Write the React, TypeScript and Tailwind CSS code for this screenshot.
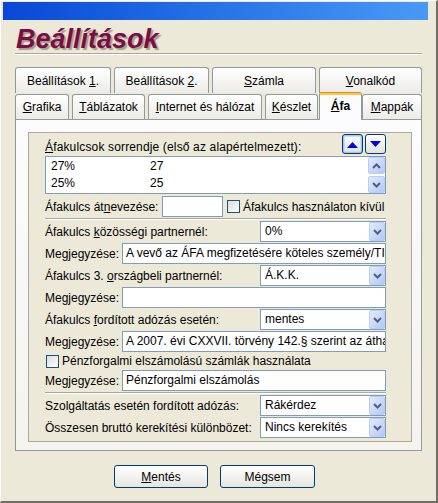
import type { ReactNode } from "react";

function Tab({
  w,
  selected,
  bold,
  children,
}: {
  w: string;
  selected?: boolean;
  bold?: boolean;
  children: ReactNode;
}) {
  if (selected) {
    return (
      <div
        className={`${w} relative z-10 -mt-[2px] h-[28px] self-start rounded-t-[3px] border-x border-[#919B9C] bg-[#FCFCFE]`}
      >
        <div className="h-[1px] rounded-t-[3px] bg-[#E68B2C]" />
        <div className="h-[2px] bg-[#FFC73C]" />
        <div className={`flex h-[22px] items-center justify-center ${bold ? "font-bold" : ""}`}>
          <span>{children}</span>
        </div>
      </div>
    );
  }
  return (
    <div
      className={`${w} flex h-full items-center justify-center rounded-t-[3px] border border-b-0 border-[#919B9C] bg-linear-to-b from-white to-[#ECEBE6]`}
    >
      <span className="whitespace-nowrap">{children}</span>
    </div>
  );
}

function Chevron({ up }: { up?: boolean }) {
  return (
    <svg width="9" height="6" viewBox="0 0 9 6">
      <path
        d={up ? "M1 5 L4.5 1.5 L8 5" : "M1 1 L4.5 4.5 L8 1"}
        fill="none"
        stroke="#4D6185"
        strokeWidth="2"
      />
    </svg>
  );
}

function ArrowButton({ up, h = "h-[17px]" }: { up?: boolean; h?: string }) {
  return (
    <div
      className={`${h} flex items-center justify-center rounded-[2px] border border-[#BBCDF7] bg-linear-to-br from-[#E2EAFE] to-[#B4C8F6]`}
    >
      <Chevron up={up} />
    </div>
  );
}

function Select({ value }: { value: string }) {
  return (
    <div className="relative h-[21px] w-[126px] shrink-0 border border-[#7F9DB9] bg-white">
      <div className="pl-[4px] leading-[19px] whitespace-nowrap">{value}</div>
      <div className="absolute top-0 right-0 bottom-0 w-[16px]">
        <ArrowButton h="h-[19px]" />
      </div>
    </div>
  );
}

function TextBox({ value, w }: { value?: string; w?: string }) {
  return (
    <div
      className={`${w ?? "flex-1"} h-[21px] min-w-0 overflow-hidden border border-[#7F9DB9] bg-white pl-[3px] leading-[19px] whitespace-nowrap`}
    >
      {value}
    </div>
  );
}

function CheckBox() {
  return (
    <div className="h-[13px] w-[13px] shrink-0 border border-[#1C5180] bg-linear-to-br from-[#DCDCD7] to-white" />
  );
}

function SortButton({ up }: { up?: boolean }) {
  return (
    <div
      className={`flex h-[20px] w-[21px] items-center justify-center rounded-[3px] border border-[#003C74] bg-linear-to-b from-white to-[#E3E3DB] ${
        up ? "shadow-[inset_0_0_0_1px_#A9C2F0,inset_0_0_0_2px_#CEDCF7]" : ""
      }`}
    >
      <svg width="11" height="7" viewBox="0 0 11 7">
        <path d={up ? "M0 7 L5.5 1 L11 7 Z" : "M0 0 L11 0 L5.5 6 Z"} fill="#0000F0" />
      </svg>
    </div>
  );
}

function Row({ label, children }: { label: ReactNode; children: ReactNode }) {
  return (
    <div className="mt-[1px] flex h-[21px] items-center">
      <div className="flex-1 whitespace-nowrap">{label}</div>
      {children}
    </div>
  );
}

function NoteRow({ value }: { value?: string }) {
  return (
    <div className="mt-[1px] flex h-[21px] items-center">
      <div className="w-[77px] shrink-0 whitespace-nowrap">Megjegyzése:</div>
      <TextBox value={value} />
    </div>
  );
}

function Separator() {
  return <div className="mt-[1px] h-[2px] border-t border-b border-t-[#ACA899] border-b-white" />;
}

export default function App() {
  return (
    <div className="relative h-[503px] w-[438px] border-t border-l border-white border-r-2 border-b-2 border-r-[#716F64] border-b-[#716F64] bg-[#ECE9D8] font-['Liberation_Sans',Arial,sans-serif] text-[12px] leading-[14px] text-black">
      <div className="mt-[1px] ml-[2px] h-[18px] w-[425px] bg-linear-to-r from-[#0847D6] to-[#4A99F7]" />

      <div className="ml-[14px] w-[407px]">
        <div className="mt-[5px] h-[28px] pl-[1px] text-[27px] leading-[28px] font-bold text-[#7B0C46] italic [text-shadow:2px_2px_1px_#A29F92]">
          Beállítások
        </div>
        <div className="h-[2px] border-t border-b border-t-[#ACA899] border-b-white" />

        <div className="mt-[12px] flex h-[26px] gap-[3px]">
          <Tab w="w-[96px]">
            Beállítások <u>1</u>.
          </Tab>
          <Tab w="w-[95px]">
            Beállítások <u>2</u>.
          </Tab>
          <Tab w="w-[104px]">
            <u>S</u>zámla
          </Tab>
          <Tab w="w-[103px]">
            <u>V</u>onalkód
          </Tab>
        </div>

        <div className="mt-[1px] flex h-[25px]">
          <Tab w="w-[54px]">
            <u>G</u>rafika
          </Tab>
          <div className="w-[3px]" />
          <Tab w="w-[73px]">
            <u>T</u>áblázatok
          </Tab>
          <div className="w-[3px]" />
          <Tab w="w-[114px]">
            <u>I</u>nternet és hálózat
          </Tab>
          <div className="w-[3px]" />
          <Tab w="w-[53px]">
            <u>K</u>észlet
          </Tab>
          <div className="w-[1px]" />
          <Tab w="w-[43px]" selected bold>
            <u>Á</u>fa
          </Tab>
          <Tab w="w-[60px]">
            <u>M</u>appák
          </Tab>
        </div>

        <div className="h-[332px] border border-[#919B9C] bg-linear-to-b from-[#FCFCFE] to-[#F4F3EE] pt-[12px] pl-[12px]">
          <div className="h-[310px] w-[384px] border border-[#ACA899] bg-[#ECE9D8] pt-[1px] pl-[16px]">
            <div className="w-[341px]">
              <div className="flex h-[20px] items-end justify-between">
                <div className="whitespace-nowrap tracking-[0.15px]">
                  <u>Á</u>fakulcsok sorrendje (első az alapértelmezett):
                </div>
                <div className="flex gap-[2px]">
                  <SortButton up />
                  <SortButton />
                </div>
              </div>

              <div className="mt-[2px] flex h-[38px] border border-[#7F9DB9] bg-white">
                <div className="flex-1 pl-[5px]">
                  <div className="flex h-[17px] items-center">
                    <div className="w-[99px]">27%</div>
                    <div>27</div>
                  </div>
                  <div className="flex h-[17px] items-center">
                    <div className="w-[99px]">25%</div>
                    <div>25</div>
                  </div>
                </div>
                <div className="flex w-[17px] flex-col justify-between">
                  <ArrowButton up />
                  <ArrowButton />
                </div>
              </div>

              <div className="mt-[2px] flex h-[21px] items-center">
                <div className="w-[117px] shrink-0 whitespace-nowrap">
                  Áfakulcs át<u>n</u>evezése:
                </div>
                <TextBox w="w-[61px]" />
                <div className="ml-[4px]">
                  <CheckBox />
                </div>
                <div className="ml-[3px] whitespace-nowrap">Áfakulcs használaton kívül</div>
              </div>

              <div className="mt-[1px]">
                <Separator />
              </div>

              <Row
                label={
                  <>
                    Áfakulcs <u>k</u>özösségi partnernél:
                  </>
                }
              >
                <Select value="0%" />
              </Row>
              <NoteRow value="A vevő az ÁFA megfizetésére köteles személy/TIG" />
              <Row
                label={
                  <>
                    Áfakulcs 3. <u>o</u>rszágbeli partnernél:
                  </>
                }
              >
                <Select value="Á.K.K." />
              </Row>
              <NoteRow />
              <Row
                label={
                  <>
                    Áfakulcs <u>f</u>ordított adózás esetén:
                  </>
                }
              >
                <Select value="mentes" />
              </Row>
              <NoteRow value="A 2007. évi CXXVII. törvény 142.§ szerint az áthárított adó" />

              <div className="mt-[1px] flex h-[16px] items-center">
                <div className="ml-[1px]">
                  <CheckBox />
                </div>
                <div className="ml-[3px] whitespace-nowrap">
                  Pénzforgalmi elszámolású számlák használata
                </div>
              </div>
              <NoteRow value="Pénzforgalmi elszámolás" />

              <Separator />

              <Row label="Szolgáltatás esetén fordított adózás:">
                <Select value="Rákérdez" />
              </Row>
              <Row label="Összesen bruttó kerekítési különbözet:">
                <Select value="Nincs kerekítés" />
              </Row>
            </div>
          </div>
        </div>
      </div>

      <div className="mt-[14px] flex gap-[12px] pl-[113px]">
        <div className="flex h-[23px] w-[94px] items-center justify-center rounded-[3px] border border-[#003C74] bg-linear-to-b from-white to-[#E6E5DE]">
          <span>
            <u>M</u>entés
          </span>
        </div>
        <div className="flex h-[23px] w-[95px] items-center justify-center rounded-[3px] border border-[#003C74] bg-linear-to-b from-white to-[#E6E5DE]">
          <span>
            Mé<u>g</u>sem
          </span>
        </div>
      </div>
    </div>
  );
}
